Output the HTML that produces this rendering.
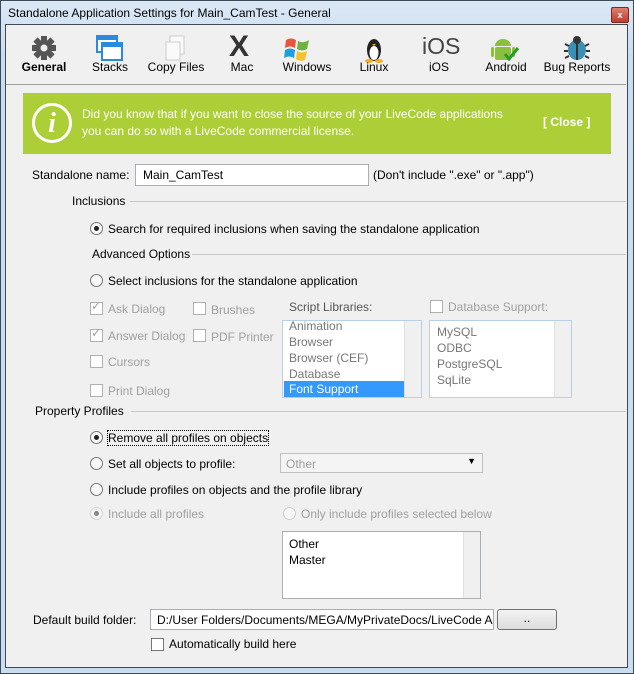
<!DOCTYPE html>
<html><head><style>
body{margin:0;width:634px;height:674px;overflow:hidden;font-family:"Liberation Sans",sans-serif;font-size:12px;color:#000;background:#fff}
.win{position:absolute;left:0;top:0;width:632px;height:672px;border:1px solid #3c4a5a;background:linear-gradient(#dbe8f6,#c9dcf0 60px,#c9dcf0)}
.title{position:absolute;left:7px;top:5px;font-size:12px}
.xb{position:absolute;left:610px;top:6px;width:16px;height:14px;background:linear-gradient(#e08070,#c13c2c);border:1px solid #7a2a20;border-radius:2px;color:#fff;font-size:9px;text-align:center;line-height:14px;font-weight:bold}
.client{position:absolute;left:5px;top:24px;width:621px;height:642px;background:#f0f0f0;border:1px solid #404a55}
.a{position:absolute;white-space:nowrap}
.tb{position:absolute;top:60px;font-size:12px;text-align:center;width:70px}
.ic{position:absolute;top:34px}
.g{color:#a0a0a0}
.cb{position:absolute;width:11px;height:11px;border:1px solid #b0b0b0;background:#fff}
.rb{position:absolute;width:11px;height:11px;border:1px solid #777;border-radius:50%;background:#f8f8f8}
.rb.on::after{content:"";position:absolute;left:3px;top:3px;width:5px;height:5px;border-radius:50%;background:#222}
.line{position:absolute;height:1px;background:#c8c8c8}
.box{position:absolute;background:#fff;border:1px solid #abadb3}
.sb{position:absolute;right:0;top:0;bottom:0;width:16px;background:#f0f0f0;border-left:1px solid #e0e0e0}
</style></head><body>
<div class="win">
<div class="title">Standalone Application Settings for Main_CamTest - General</div>
<div class="xb">x</div>
</div>
<div class="client"></div>
<svg class="ic" style="left:30px" width="28" height="28" viewBox="0 0 28 28"><g fill="#555"><circle cx="14" cy="14" r="8"/><rect x="11" y="2" width="6" height="24"/><rect x="2" y="11" width="24" height="6"/><rect x="11" y="2" width="6" height="24" transform="rotate(45 14 14)"/><rect x="11" y="2" width="6" height="24" transform="rotate(-45 14 14)"/></g><circle cx="14" cy="14" r="3.5" fill="#f0f0f0"/></svg>
<svg class="ic" style="left:95px" width="28" height="28"><rect x="2" y="2" width="20" height="16" fill="#fff" stroke="#2a8ae0" stroke-width="2"/><rect x="2" y="2" width="20" height="4" fill="#2a8ae0"/><rect x="7" y="9" width="20" height="17" fill="#fff" stroke="#2a8ae0" stroke-width="2"/><rect x="7" y="9" width="20" height="4" fill="#2a8ae0"/></svg>
<svg class="ic" style="left:162px" width="28" height="28"><rect x="8" y="2" width="14" height="18" fill="#fafafa" stroke="#ccc"/><rect x="4" y="8" width="14" height="18" fill="#fafafa" stroke="#ccc"/></svg>
<div class="a" style="left:229px;top:30px;font-size:30px;font-weight:bold;color:#333">X</div>
<svg class="ic" style="left:282px" width="30" height="30"><path d="M4 6 Q9 3 14 6 L13 14 Q8 11 3 14Z" fill="#e8553a"/><path d="M16 7 Q21 10 27 6 L25 15 Q20 18 15 15Z" fill="#6cb33f"/><path d="M3 16 Q8 13 13 16 L12 24 Q7 21 2 24Z" fill="#1ea0dc"/><path d="M15 17 Q20 20 25 17 L23 26 Q18 28 14 25Z" fill="#f6c22b"/></svg>
<svg class="ic" style="left:363px" width="22" height="30"><ellipse cx="11" cy="16" rx="7" ry="11" fill="#222"/><ellipse cx="11" cy="19" rx="4.5" ry="7" fill="#fff"/><ellipse cx="6" cy="27" rx="4" ry="2" fill="#f0b020"/><ellipse cx="16" cy="27" rx="4" ry="2" fill="#f0b020"/><path d="M9 10 L13 10 L11 12Z" fill="#f0b020"/></svg>
<div class="a" style="left:422px;top:33px;font-size:23px;color:#444">iOS</div>
<svg class="ic" style="left:490px" width="30" height="30"><path d="M5 12 A8 7 0 0 1 21 12Z" fill="#8ac03c"/><rect x="5" y="13" width="16" height="13" rx="2" fill="#8ac03c"/><rect x="1" y="13" width="3" height="10" rx="1.5" fill="#8ac03c"/><rect x="22" y="13" width="3" height="10" rx="1.5" fill="#8ac03c"/><path d="M15 20 L19 25 L28 14" stroke="#2a9a2a" stroke-width="3" fill="none"/></svg>
<svg class="ic" style="left:563px" width="28" height="28"><ellipse cx="14" cy="16" rx="9" ry="10" fill="#3a8fb7"/><circle cx="14" cy="6" r="4" fill="#333"/><g stroke="#333" stroke-width="2"><line x1="2" y1="10" x2="6" y2="12"/><line x1="26" y1="10" x2="22" y2="12"/><line x1="1" y1="17" x2="5" y2="17"/><line x1="27" y1="17" x2="23" y2="17"/><line x1="2" y1="24" x2="6" y2="22"/><line x1="26" y1="24" x2="22" y2="22"/><line x1="14" y1="8" x2="14" y2="26"/></g></svg>
<div class="tb" style="left:9px;font-weight:bold">General</div>
<div class="tb" style="left:75px">Stacks</div>
<div class="tb" style="left:141px">Copy Files</div>
<div class="tb" style="left:207px">Mac</div>
<div class="tb" style="left:272px">Windows</div>
<div class="tb" style="left:339px">Linux</div>
<div class="tb" style="left:404px">iOS</div>
<div class="tb" style="left:471px">Android</div>
<div class="tb" style="left:542px">Bug Reports</div>
<div class="line" style="left:6px;top:84px;width:620px;background:#a0a0a0"></div>
<div class="a" style="left:23px;top:93px;width:588px;height:61px;background:#acce36"></div>
<div class="a" style="left:32px;top:103px;width:34px;height:34px;border:3px solid #fff;border-radius:50%;color:#fff;font:italic bold 28px 'Liberation Serif',serif;text-align:center;line-height:36px">i</div>
<div class="a" style="left:82px;top:106px;color:#fff;line-height:17px">Did you know that if you want to close the source of your LiveCode applications<br>you can do so with a LiveCode commercial license.</div>
<div class="a" style="left:543px;top:115px;color:#fff;font-weight:bold">[ Close ]</div>
<div class="a" style="left:32px;top:168px">Standalone name:</div>
<div class="box" style="left:135px;top:164px;width:232px;height:20px"><span class="a" style="left:7px;top:3px">Main_CamTest</span></div>
<div class="a" style="left:373px;top:168px">(Don't include ".exe" or ".app")</div>
<div class="a" style="left:72px;top:194px">Inclusions</div>
<div class="line" style="left:130px;top:201px;width:496px"></div>
<div class="rb on" style="left:90px;top:222px"></div>
<div class="a" style="left:108px;top:222px">Search for required inclusions when saving the standalone application</div>
<div class="a" style="left:92px;top:247px">Advanced Options</div>
<div class="line" style="left:192px;top:254px;width:434px"></div>
<div class="rb" style="left:90px;top:274px"></div>
<div class="a" style="left:108px;top:274px">Select inclusions for the standalone application</div>
<div class="cb" style="left:90px;top:302px"></div><div class="a g" style="left:91px;top:299px">✓</div>
<div class="a g" style="left:108px;top:302px">Ask Dialog</div>
<div class="cb" style="left:193px;top:302px"></div><div class="a g" style="left:211px;top:303px">Brushes</div>
<div class="cb" style="left:90px;top:329px"></div><div class="a g" style="left:91px;top:326px">✓</div>
<div class="a g" style="left:108px;top:329px">Answer Dialog</div>
<div class="cb" style="left:193px;top:329px"></div><div class="a g" style="left:211px;top:330px">PDF Printer</div>
<div class="cb" style="left:90px;top:355px"></div><div class="a g" style="left:108px;top:355px">Cursors</div>
<div class="cb" style="left:90px;top:384px"></div><div class="a g" style="left:108px;top:384px">Print Dialog</div>
<div class="a" style="left:289px;top:300px;color:#555">Script Libraries:</div>
<div class="box" style="left:282px;top:320px;width:138px;height:76px;border-color:#b8cfe8;overflow:hidden">
<div class="a g" style="left:6px;top:-3px;line-height:16px;color:#777">Animation<br>Browser<br>Browser (CEF)<br>Database</div>
<div class="a" style="left:1px;top:60px;width:121px;height:16px;background:#3399ff;color:#fff;line-height:16px;padding-left:5px;box-sizing:border-box">Font Support</div>
<div class="sb"></div></div>
<div class="cb" style="left:430px;top:300px"></div><div class="a g" style="left:448px;top:300px">Database Support:</div>
<div class="box" style="left:429px;top:320px;width:141px;height:76px;border-color:#b8cfe8">
<div class="a" style="left:7px;top:3px;line-height:16px;color:#777">MySQL<br>ODBC<br>PostgreSQL<br>SqLite</div><div class="sb"></div></div>
<div class="a" style="left:35px;top:404px">Property Profiles</div>
<div class="line" style="left:131px;top:411px;width:495px"></div>
<div class="rb on" style="left:90px;top:431px"></div>
<div class="a" style="left:107px;top:430px;border:1px dotted #000">Remove all profiles on objects</div>
<div class="rb" style="left:90px;top:457px"></div><div class="a" style="left:108px;top:457px">Set all objects to profile:</div>
<div class="box" style="left:280px;top:453px;width:201px;height:18px;background:#f4f4f4;border-color:#c0c0c0"><span class="a g" style="left:5px;top:3px">Other</span><span class="a" style="right:6px;top:2px;font-size:9px">▼</span></div>
<div class="rb" style="left:90px;top:483px"></div><div class="a" style="left:108px;top:483px">Include profiles on objects and the profile library</div>
<div class="rb on" style="left:90px;top:507px;border-color:#bbb;opacity:.5"></div><div class="a g" style="left:108px;top:507px">Include all profiles</div>
<div class="rb" style="left:283px;top:507px;border-color:#ccc"></div><div class="a g" style="left:301px;top:507px">Only include profiles selected below</div>
<div class="box" style="left:282px;top:531px;width:197px;height:66px"><div class="a" style="left:6px;top:4px;line-height:16px">Other<br>Master</div><div class="sb"></div></div>
<div class="a" style="left:33px;top:613px">Default build folder:</div>
<div class="box" style="left:150px;top:609px;width:342px;height:19px;overflow:hidden"><span class="a" style="left:6px;top:3px">D:/User Folders/Documents/MEGA/MyPrivateDocs/LiveCode A</span></div>
<div class="a" style="left:497px;top:609px;width:58px;height:19px;border:1px solid #707070;border-radius:3px;background:linear-gradient(#f4f4f4,#dcdcdc);text-align:center;line-height:17px">..</div>
<div class="cb" style="left:151px;top:638px;border-color:#777"></div><div class="a" style="left:169px;top:637px">Automatically build here</div>
</body></html>
